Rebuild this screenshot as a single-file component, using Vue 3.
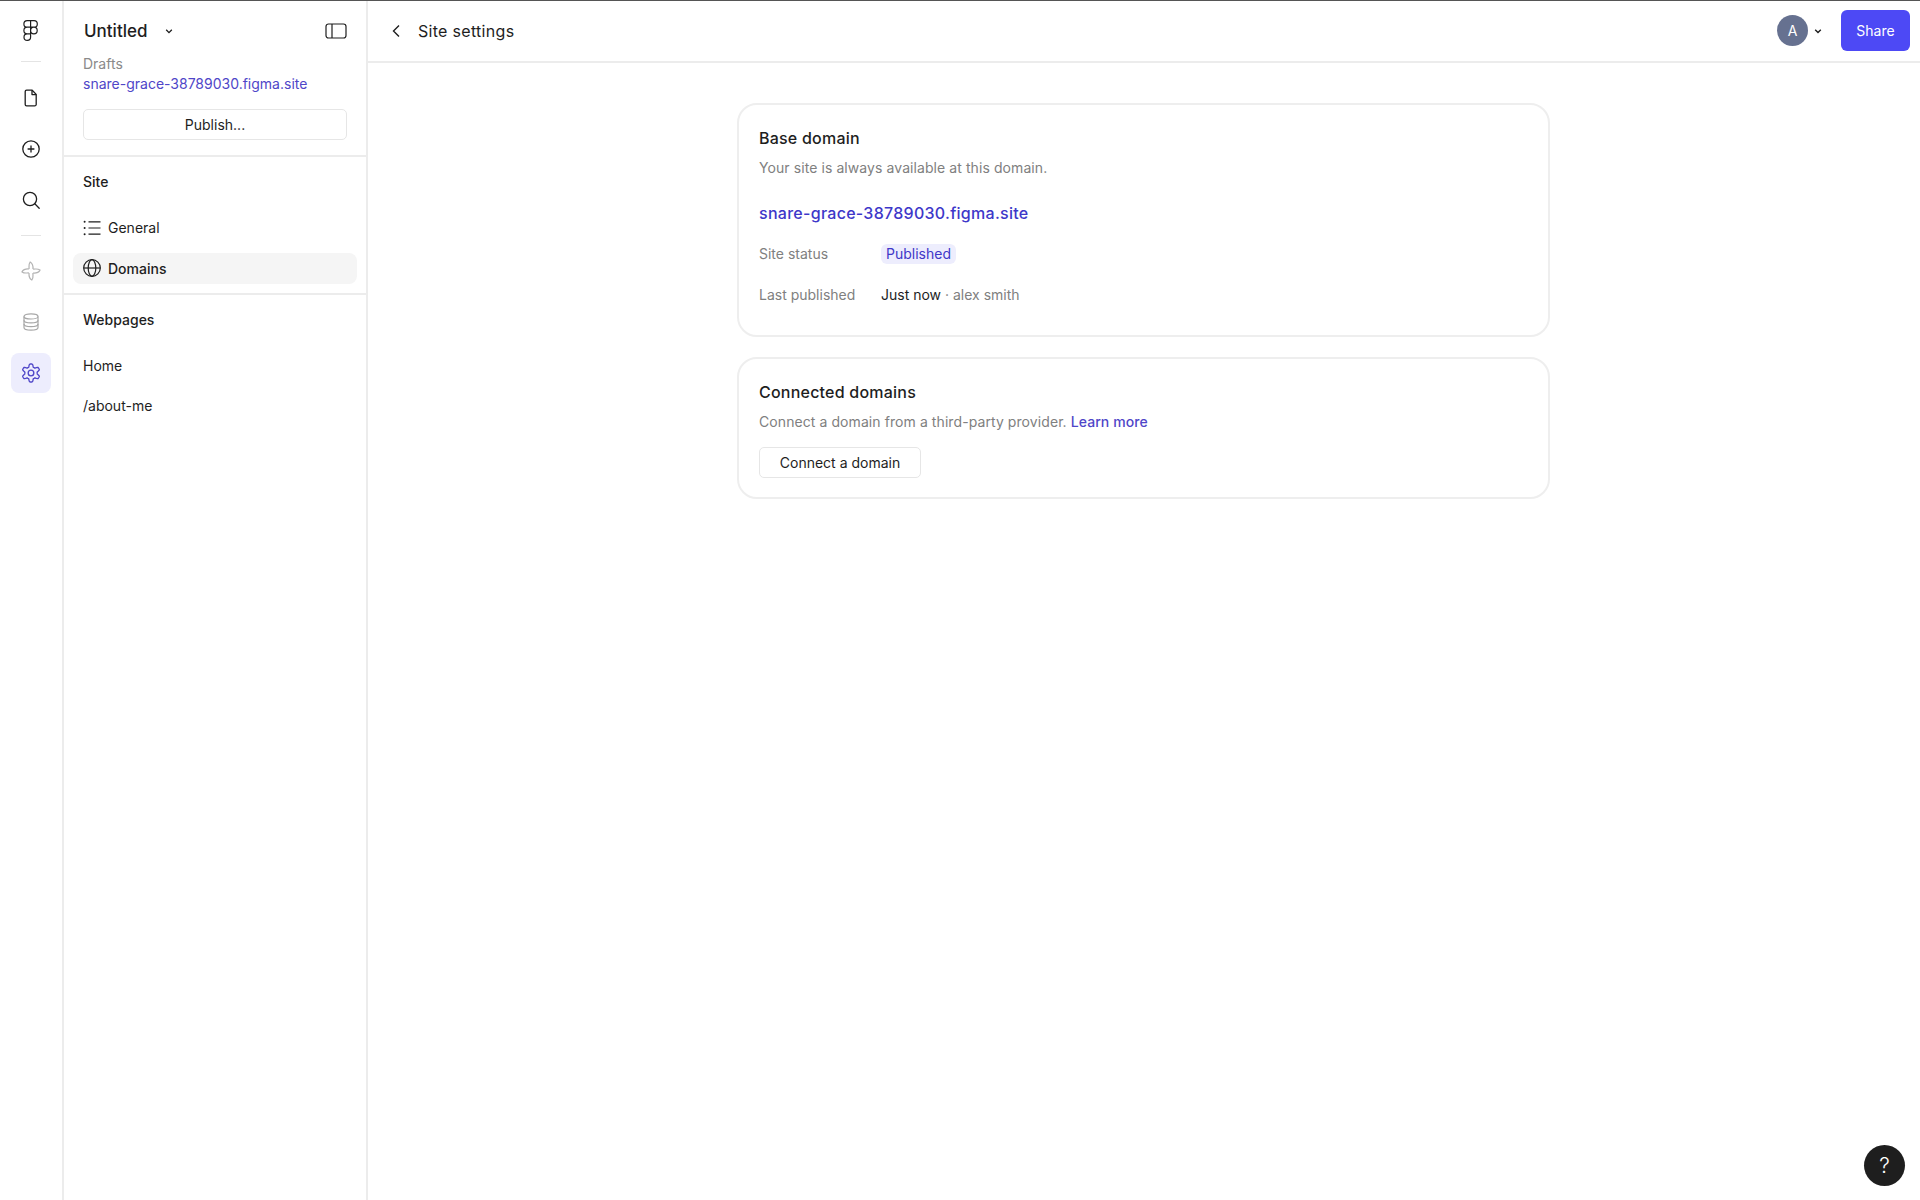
<template>
  <div class="app">
    <nav class="rail">
      <div class="rail-btn">
        <svg width="20" height="24" viewBox="0 0 20 24" fill="none" stroke="#1e1e1e" stroke-width="1.2">
          <path d="M9.6 2.6H6.2a3.3 3.3 0 0 0 0 6.6h3.4zM9.6 2.6h3.4a3.3 3.3 0 0 1 0 6.6H9.6zM9.6 9.2H6.2a3.3 3.3 0 0 0 0 6.6h3.4zM9.6 15.8H6.2a3.3 3.3 0 1 0 3.4 3.3zM16.2 12.5a3.3 3.3 0 1 1-6.6 0 3.3 3.3 0 0 1 6.6 0z" />
        </svg>
      </div>
      <div class="rail-line"></div>
      <div class="rail-btn">
        <svg width="20" height="20" viewBox="0 0 20 20" fill="none" stroke="#1e1e1e" stroke-width="1.3" stroke-linejoin="round">
          <path d="M5.6 2.2h5.6l4 4.2v10a1.4 1.4 0 0 1-1.4 1.4H5.6a1.4 1.4 0 0 1-1.4-1.4V3.6a1.4 1.4 0 0 1 1.4-1.4z" />
          <path d="M11 2.2v4.4h4.2" />
        </svg>
      </div>
      <div class="rail-btn">
        <svg width="20" height="20" viewBox="0 0 20 20" fill="none" stroke="#1e1e1e" stroke-width="1.3">
          <circle cx="10" cy="10" r="8.2" />
          <path d="M10 6.6v6.8M6.6 10h6.8" />
        </svg>
      </div>
      <div class="rail-btn">
        <svg width="20" height="20" viewBox="0 0 20 20" fill="none" stroke="#1e1e1e" stroke-width="1.3" stroke-linecap="round">
          <circle cx="9" cy="9" r="6.6" />
          <path d="M13.8 13.8l4.4 4.4" />
        </svg>
      </div>
      <div class="rail-line low"></div>
      <div class="rail-btn">
        <svg width="22" height="22" viewBox="0 0 20 20" fill="none" stroke="#b4b4b4" stroke-width="1.1" stroke-linejoin="round">
          <g v-for="deg in [0, 90, 180, 270]" :key="deg" :transform="`rotate(${deg} 10 10)`">
            <path d="M8.2 8.2C8.5 6 7.4 4.4 9.2 1.8c2.2 1.2 2.8 3.8 2.6 6.4" />
          </g>
        </svg>
      </div>
      <div class="rail-btn">
        <svg width="20" height="20" viewBox="0 0 20 20" fill="none" stroke="#a8a8a8" stroke-width="1.2">
          <ellipse cx="10" cy="4.4" rx="7" ry="2.6" />
          <path d="M3 4.4v11.2c0 1.4 3.1 2.6 7 2.6s7-1.2 7-2.6V4.4" />
          <path d="M3 8.2c0 1.4 3.1 2.6 7 2.6s7-1.2 7-2.6M3 12c0 1.4 3.1 2.6 7 2.6s7-1.2 7-2.6" />
        </svg>
      </div>
      <div class="rail-btn on">
        <svg width="20" height="20" viewBox="0 0 24 24" fill="none" stroke="#4f46c8" stroke-width="1.6" stroke-linejoin="round">
          <path :d="gearPath" />
          <circle cx="12" cy="12" r="3.4" />
        </svg>
      </div>
    </nav>

    <aside class="side">
      <div class="side-top">
        <div class="title-row">
          <span class="file-name">Untitled</span>
          <svg class="chev" width="10" height="10" viewBox="0 0 10 10" fill="none" stroke="#1e1e1e" stroke-width="1.3">
            <path d="M2.2 3.8L5 6.6l2.8-2.8" />
          </svg>
          <svg class="panel" width="22" height="16" viewBox="0 0 22 16" fill="none" stroke="#1e1e1e" stroke-width="1.2">
            <rect x="1" y="1" width="20" height="14" rx="2.5" />
            <path d="M7 1v14" />
          </svg>
        </div>
        <div class="drafts">Drafts</div>
        <a class="site-link">snare-grace-38789030.figma.site</a>
        <button class="btn publish">Publish...</button>
      </div>

      <div class="side-group">
        <h3>Site</h3>
        <div class="item">
          <svg width="18" height="18" viewBox="0 0 18 18" fill="none" stroke="#1e1e1e" stroke-width="1.2">
            <path d="M5.5 2.8h12M5.5 9h12M5.5 15.2h12" />
            <circle cx="1.6" cy="2.8" r="1" fill="#1e1e1e" stroke="none" />
            <circle cx="1.6" cy="9" r="1" fill="#1e1e1e" stroke="none" />
            <circle cx="1.6" cy="15.2" r="1" fill="#1e1e1e" stroke="none" />
          </svg>
          General
        </div>
        <div class="item active">
          <svg width="18" height="18" viewBox="0 0 18 18" fill="none" stroke="#1e1e1e" stroke-width="1.2">
            <circle cx="9" cy="9" r="8.3" />
            <ellipse cx="9" cy="9" rx="3.8" ry="8.3" />
            <path d="M.7 9h16.6" />
          </svg>
          Domains
        </div>
      </div>

      <div class="side-group no-line">
        <h3>Webpages</h3>
        <div class="item page">Home</div>
        <div class="item page">/about-me</div>
      </div>
    </aside>

    <section class="main">
      <header class="bar">
        <svg class="back" width="12" height="16" viewBox="0 0 12 16" fill="none" stroke="#1e1e1e" stroke-width="1.4">
          <path d="M9 2.5L3.5 8 9 13.5" />
        </svg>
        <span class="bar-title">Site settings</span>
        <div class="bar-right">
          <span class="avatar">A</span>
          <svg class="chev2" width="10" height="10" viewBox="0 0 10 10" fill="none" stroke="#1e1e1e" stroke-width="1.4">
            <path d="M2.2 3.8L5 6.6l2.8-2.8" />
          </svg>
          <button class="share">Share</button>
        </div>
      </header>

      <div class="content">
        <div class="card first">
          <h2>Base domain</h2>
          <p class="muted">Your site is always available at this domain.</p>
          <a class="big-link">snare-grace-38789030.figma.site</a>
          <div class="meta">
            <span class="muted label">Site status</span>
            <span class="badge">Published</span>
          </div>
          <div class="meta">
            <span class="muted label">Last published</span>
            <span>Just now <span class="muted">· alex smith</span></span>
          </div>
        </div>

        <div class="card">
          <h2>Connected domains</h2>
          <p class="muted">Connect a domain from a third-party provider. <a class="learn">Learn more</a></p>
          <button class="btn connect">Connect a domain</button>
        </div>
      </div>
    </section>

    <div class="help">?</div>
  </div>
</template>

<script setup>
// six rounded lobes, flat enough on top to read as the settings cog
const gearPoints = []
for (let i = 0; i < 96; i++) {
  const a = (i / 96) * Math.PI * 2
  const wave = Math.max(-1, Math.min(1, 1.7 * Math.cos(6 * a)))
  const r = 9.1 + 1.7 * wave
  gearPoints.push(`${(12 + r * Math.sin(a)).toFixed(2)} ${(12 - r * Math.cos(a)).toFixed(2)}`)
}
const gearPath = `M${gearPoints.join('L')}Z`
</script>

<style>
html, body {
  margin: 0;
  background: #fff;
}
</style>

<style scoped>
.app {
  display: flex;
  height: 1200px;
  border-top: 1px solid #555;
  box-sizing: border-box;
  font-family: Inter, "Noto Sans", sans-serif;
  font-size: 14px;
  color: #1e1e1e;
  overflow: hidden;
}

.rail {
  width: 62px;
  flex: none;
  border-right: 2px solid #ececec;
  display: flex;
  flex-direction: column;
  align-items: center;
  padding-top: 9px;
}

.rail-btn {
  width: 40px;
  height: 40px;
  margin-bottom: 11px;
  display: flex;
  align-items: center;
  justify-content: center;
  border-radius: 8px;
}

.rail-btn.on {
  background: #ededfd;
}

.rail-line {
  width: 20px;
  height: 1px;
  background: #e4e4e4;
  margin: 0 0 16px;
}

.rail-line.low {
  margin: 4px 0 15px;
}

.side {
  width: 302px;
  flex: none;
  border-right: 2px solid #ececec;
}

.side-top {
  padding: 0 19px 15px 19px;
  border-bottom: 2px solid #ececec;
}

.title-row {
  display: flex;
  align-items: center;
  height: 60px;
}

.file-name {
  font-size: 17px;
  font-weight: 500;
  margin-left: 1px;
}

.chev {
  margin-left: 17px;
}

.panel {
  margin-left: auto;
}

.drafts {
  color: #8a8a8a;
  line-height: 20px;
  margin-top: -7px;
}

.site-link {
  display: block;
  color: #4f46c8;
  line-height: 20px;
}

.btn {
  background: #fff;
  border: 1px solid #e6e6e6;
  border-radius: 5px;
  font: inherit;
  color: #1e1e1e;
  height: 31px;
  padding: 0;
}

.publish {
  display: block;
  width: 100%;
  margin-top: 15px;
}

.side-group {
  padding: 0 9px 9px 9px;
  border-bottom: 2px solid #ececec;
}

.side-group.no-line {
  border-bottom: 0;
}

.side-group h3 {
  margin: 0;
  padding: 15px 10px 20px;
  font-size: 14px;
  font-weight: 500;
  line-height: 20px;
}

.item {
  display: flex;
  align-items: center;
  gap: 7px;
  height: 31px;
  margin-bottom: 9.5px;
  padding: 0 10px;
  border-radius: 8px;
}

.item:last-child {
  margin-bottom: 0;
}

.item.active {
  background: #f5f5f5;
  font-weight: 500;
}

.main {
  flex: 1;
  min-width: 0;
}

.bar {
  height: 59px;
  padding: 0 10px 1px 22px;
  border-bottom: 2px solid #ececec;
  display: flex;
  align-items: center;
}

.back {
  margin-right: 16px;
}

.bar-title {
  font-size: 16px;
  letter-spacing: 0.3px;
}

.bar-right {
  margin-left: auto;
  display: flex;
  align-items: center;
}

.avatar {
  width: 31px;
  height: 31px;
  border-radius: 50%;
  background: #667190;
  color: #fff;
  display: flex;
  align-items: center;
  justify-content: center;
  font-size: 14px;
}

.chev2 {
  margin: 0 18px 0 5px;
}

.share {
  width: 69px;
  height: 41px;
  border: 0;
  border-radius: 6px;
  background: #4d49f5;
  color: #fff;
  font: inherit;
}

.content {
  width: 813px;
  margin: 40px 0 0 369px;
  display: flex;
  flex-direction: column;
  gap: 20px;
}

.card {
  border: 2px solid #eeeeee;
  border-radius: 20px;
  padding: 21px 19px 19px 20px;
  box-sizing: border-box;
}

.card.first {
  padding-bottom: 25px;
}

.card h2 {
  margin: 0;
  font-size: 16px;
  font-weight: 500;
  line-height: 24px;
  letter-spacing: 0.22px;
}

.muted {
  color: #808080;
}

.card p {
  margin: 8px 0 0;
  line-height: 20px;
  letter-spacing: 0.08px;
}

.big-link {
  display: block;
  margin-top: 23px;
  font-size: 16px;
  font-weight: 500;
  line-height: 24px;
  letter-spacing: 0.28px;
  color: #3d37c9;
}

.meta {
  display: flex;
  align-items: center;
  height: 31px;
  margin-top: 9.5px;
}

.big-link + .meta {
  margin-top: 13px;
}

.label {
  width: 122px;
}

.badge {
  background: #ededfd;
  color: #4038c8;
  border-radius: 6px;
  padding: 0 5px;
  line-height: 20px;
}

.learn {
  color: #4f46c8;
  font-weight: 500;
}

.connect {
  display: block;
  width: 162px;
  margin-top: 15px;
}

.help {
  position: absolute;
  left: 1864px;
  top: 1145px;
  width: 41px;
  height: 41px;
  border-radius: 50%;
  background: #1e1e1e;
  color: #fff;
  display: flex;
  align-items: center;
  justify-content: center;
  font-size: 21px;
  font-weight: 300;
}
</style>
